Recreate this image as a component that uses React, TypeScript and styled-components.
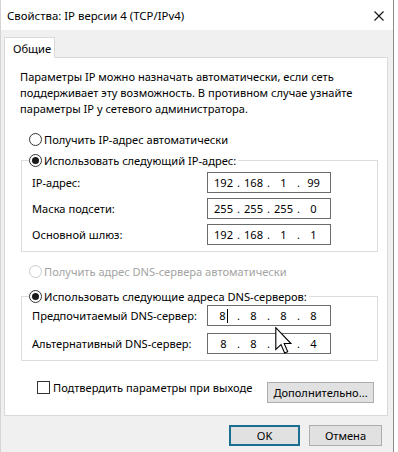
import { Fragment } from 'react';
import styled, { createGlobalStyle } from 'styled-components';

const GlobalStyle = createGlobalStyle`
  html, body {
    margin: 0;
    padding: 0;
    background: #ffffff;
  }
  body {
    font-family: "Noto Sans", "Open Sans", sans-serif;
    font-size: 11.1px;
    color: #000;
  }
`;

const St = {
  Window: styled.div`
    position: relative;
    width: 394px;
    height: 452px;
    display: flex;
    flex-direction: column;
    background: #f0f0f0;
    border-right: 1px solid #8a8a8a;
    border-left: 1px solid #d4d4d4;
    box-sizing: border-box;
    overflow: hidden;
  `,
  TitleBar: styled.div`
    height: 30px;
    flex: none;
    display: flex;
    align-items: center;
    justify-content: space-between;
    background: #fff;
    padding: 0 9px 0 6px;
    font-size: 11.4px;
  `,
  Close: styled.svg`
    width: 10px;
    height: 10px;
    margin-top: 1px;
  `,
  Body: styled.div`
    padding: 7px 5px 0 3px;
    display: flex;
    flex-direction: column;
  `,
  TabStrip: styled.div`
    display: flex;
    height: 21px;
    position: relative;
    z-index: 1;
    margin-bottom: -1px;
  `,
  Tab: styled.div`
    width: 51px;
    height: 21px;
    box-sizing: border-box;
    background: #fff;
    border: 1px solid #d9d9d9;
    border-bottom: none;
    padding-left: 8px;
    line-height: 21px;
  `,
  Panel: styled.div`
    height: 359px;
    box-sizing: border-box;
    background: #fff;
    border: 1px solid #d9d9d9;
    padding: 11px 0 0 15px;
    display: flex;
    flex-direction: column;
  `,
  Intro: styled.p`
    margin: 0 0 14px;
    line-height: 16px;
    white-space: nowrap;
  `,
  Choice: styled.label<{ $disabled?: boolean; $top?: number }>`
    display: flex;
    align-items: center;
    gap: 2px;
    height: 16px;
    margin-top: ${(p) => p.$top ?? 0}px;
    color: ${(p) => (p.$disabled ? '#a3a3a3' : '#000')};
    white-space: nowrap;
  `,
  Option: styled.div`
    margin-left: 9px;
  `,
  Radio: styled.span<{ $checked?: boolean; $disabled?: boolean }>`
    width: 13px;
    height: 13px;
    box-sizing: border-box;
    border-radius: 50%;
    border: 1px solid ${(p) => (p.$disabled ? '#cccccc' : '#333')};
    background: #fff;
    display: flex;
    align-items: center;
    justify-content: center;
    &::after {
      content: '';
      display: ${(p) => (p.$checked ? 'block' : 'none')};
      width: 7px;
      height: 7px;
      border-radius: 50%;
      background: #1a1a1a;
    }
  `,
  Group: styled.fieldset<{ $top: number; $padTop: number; $gap: number }>`
    margin: ${(p) => p.$top}px 9px 0 1px;
    padding: ${(p) => p.$padTop}px 0 6px 10px;
    border: 1px solid #dcdcdc;
    display: flex;
    flex-direction: column;
    gap: ${(p) => p.$gap}px;
    min-width: 0;
  `,
  Legend: styled.legend`
    margin-left: -3px;
    padding: 0 2px 0 0;
  `,
  Row: styled.div`
    display: flex;
    align-items: center;
    height: 21px;
  `,
  Label: styled.span`
    width: 175px;
    white-space: nowrap;
  `,
  Address: styled.div`
    width: 124px;
    height: 21px;
    box-sizing: border-box;
    border: 1px solid #6b6b6b;
    background: #fff;
    padding-left: 4px;
    display: grid;
    grid-template-columns: 23px 7px 23px 7px 23px 7px 23px;
    align-items: center;
    text-align: center;
  `,
  Octet: styled.span`
    position: relative;
  `,
  Caret: styled.span`
    display: inline-block;
    width: 1px;
    height: 14px;
    background: #000;
    vertical-align: -3px;
    margin-left: 1px;
  `,
  Bottom: styled.div`
    display: flex;
    align-items: flex-start;
    justify-content: space-between;
    margin: 20px 13px 0 17px;
  `,
  Check: styled.label`
    display: flex;
    align-items: center;
    gap: 3px;
    height: 13px;
    white-space: nowrap;
  `,
  Box: styled.span`
    width: 13px;
    height: 13px;
    box-sizing: border-box;
    border: 1px solid #333;
    background: #fff;
  `,
  Button: styled.button<{ $default?: boolean; $w: number; $top?: number }>`
    width: ${(p) => p.$w}px;
    height: 21px;
    margin-top: ${(p) => p.$top ?? 0}px;
    box-sizing: border-box;
    font: inherit;
    color: #000;
    background: #e1e1e1;
    border: ${(p) => (p.$default ? '2px solid #1a6f93' : '1px solid #adadad')};
    padding: 0;
  `,
  Footer: styled.div`
    display: flex;
    justify-content: flex-end;
    gap: 9px;
    padding: 9px 6px 0 0;
  `,
  Pointer: styled.svg`
    position: absolute;
    left: 274px;
    top: 327px;
    width: 17px;
    height: 28px;
  `,
};

type Octets = [string, string, string, string];

const AddressField = ({ value, caret }: { value: Octets; caret?: boolean }) => (
  <St.Address>
    {value.map((o, i) => (
      <Fragment key={i}>
        {i > 0 && <span>.</span>}
        <St.Octet>
          {o}
          {caret && i === 0 && <St.Caret />}
        </St.Octet>
      </Fragment>
    ))}
  </St.Address>
);

const App = () => {
  return (
    <>
      <GlobalStyle />
      <St.Window>
        <St.TitleBar>
          <span>Свойства: IP версии 4 (TCP/IPv4)</span>
          <St.Close viewBox="0 0 10 10">
            <path d="M0.5 0.5 L9.5 9.5 M9.5 0.5 L0.5 9.5" stroke="#111" strokeWidth="1.1" />
          </St.Close>
        </St.TitleBar>
        <St.Body>
          <St.TabStrip>
            <St.Tab>Общие</St.Tab>
          </St.TabStrip>
          <St.Panel>
            <St.Intro>
              Параметры IP можно назначать автоматически, если сеть
              <br />
              поддерживает эту возможность. В противном случае узнайте
              <br />
              параметры IP у сетевого администратора.
            </St.Intro>
            <St.Option>
              <St.Choice>
                <St.Radio />
                Получить IP-адрес автоматически
              </St.Choice>
            </St.Option>
            <St.Group $top={5} $padTop={4} $gap={5}>
              <St.Legend>
                <St.Choice>
                  <St.Radio $checked />
                  Использовать следующий IP-адрес:
                </St.Choice>
              </St.Legend>
              <St.Row>
                <St.Label>IP-адрес:</St.Label>
                <AddressField value={['192', '168', '1', '99']} />
              </St.Row>
              <St.Row>
                <St.Label>Маска подсети:</St.Label>
                <AddressField value={['255', '255', '255', '0']} />
              </St.Row>
              <St.Row>
                <St.Label>Основной шлюз:</St.Label>
                <AddressField value={['192', '168', '1', '1']} />
              </St.Row>
            </St.Group>
            <St.Option>
              <St.Choice $disabled $top={11}>
                <St.Radio $disabled />
                Получить адрес DNS-сервера автоматически
              </St.Choice>
            </St.Option>
            <St.Group $top={9} $padTop={1} $gap={7}>
              <St.Legend>
                <St.Choice>
                  <St.Radio $checked />
                  Использовать следующие адреса DNS-серверов:
                </St.Choice>
              </St.Legend>
              <St.Row>
                <St.Label>Предпочитаемый DNS-сервер:</St.Label>
                <AddressField value={['8', '8', '8', '8']} caret />
              </St.Row>
              <St.Row>
                <St.Label>Альтернативный DNS-сервер:</St.Label>
                <AddressField value={['8', '8', '', '4']} />
              </St.Row>
            </St.Group>
            <St.Bottom>
              <St.Check>
                <St.Box />
                Подтвердить параметры при выходе
              </St.Check>
              <St.Button $w={107} $top={1}>Дополнительно...</St.Button>
            </St.Bottom>
          </St.Panel>
          <St.Footer>
            <St.Button $default $w={71}>OK</St.Button>
            <St.Button $w={73}>Отмена</St.Button>
          </St.Footer>
        </St.Body>
        <St.Pointer viewBox="0 0 12 20">
          <path
            d="M0.5 0.5 L0.5 16 L4.2 12.6 L6.8 18.6 L9 17.6 L6.5 11.8 L11.3 11.8 Z"
            fill="#fff"
            stroke="#000"
            strokeWidth="0.8"
            strokeLinejoin="miter"
          />
        </St.Pointer>
      </St.Window>
    </>
  );
};

export default App;
